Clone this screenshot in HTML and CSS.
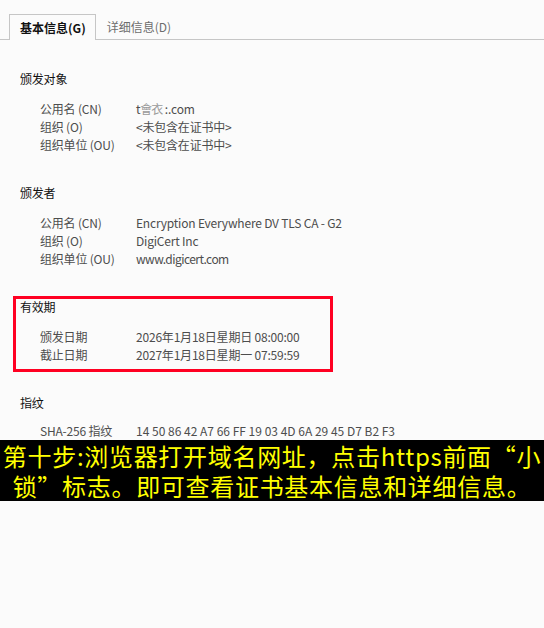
FILE: index.html
```html
<!DOCTYPE html>
<html lang="zh-CN">
<head>
<meta charset="utf-8">
<title>证书</title>
<link rel="stylesheet" href="styles.css">
</head>
<body>
<div class="page">
  <div class="tabs">
    <div class="tab active">基本信息(G)</div>
    <div class="tab">详细信息(D)</div>
  </div>
  <div class="content">
    <section class="sec first">
      <h2 class="hd">颁发对象</h2>
      <div class="rows">
        <div class="row"><span class="k">公用名 (CN)</span><span class="v">t<span class="blur">會衣</span> :.com</span></div>
        <div class="row"><span class="k">组织 (O)</span><span class="v">&lt;未包含在证书中&gt;</span></div>
        <div class="row"><span class="k">组织单位 (OU)</span><span class="v">&lt;未包含在证书中&gt;</span></div>
      </div>
    </section>
    <section class="sec">
      <h2 class="hd">颁发者</h2>
      <div class="rows">
        <div class="row"><span class="k">公用名 (CN)</span><span class="v">Encryption Everywhere DV TLS CA - G2</span></div>
        <div class="row"><span class="k">组织 (O)</span><span class="v">DigiCert Inc</span></div>
        <div class="row"><span class="k">组织单位 (OU)</span><span class="v tight">www.digicert.com</span></div>
      </div>
    </section>
    <section class="sec">
      <h2 class="hd">有效期</h2>
      <div class="rows">
        <div class="row"><span class="k">颁发日期</span><span class="v">2026年1月18日星期日 08:00:00</span></div>
        <div class="row"><span class="k">截止日期</span><span class="v">2027年1月18日星期一 07:59:59</span></div>
      </div>
    </section>
    <section class="sec">
      <h2 class="hd">指纹</h2>
      <div class="rows last">
        <div class="row"><span class="k">SHA-256 指纹</span><span class="v wide">14 50 86 42 A7 66 FF 19 03 4D 6A 29 45 D7 B2 F3</span></div>
      </div>
    </section>
  </div>
  <div class="caption">第十步:浏览器打开域名网址，点击https前面“小锁”标志。即可查看证书基本信息和详细信息。</div>
  <div class="redbox"></div>
</div>
</body>
</html>
```

FILE: styles.css
```css
html, body {
  margin: 0;
  padding: 0;
  background: #fbfbfb;
}
body {
  width: 544px;
  height: 628px;
  overflow: hidden;
  font-family: "Noto Sans CJK SC", "Noto Sans", sans-serif;
  font-size: 12px;
}
.page {
  position: relative;
  width: 544px;
  height: 628px;
}
.tabs {
  display: flex;
  padding: 14px 0 0 9px;
  border-bottom: 1px solid #c6c6c6;
  height: 25px;
}
.tab {
  height: 26px;
  line-height: 25px;
  padding: 0 10px 0 11px;
  color: #6d6d6d;
  box-sizing: border-box;
  white-space: nowrap;
}
.tab.active {
  border: 1px solid #c6c6c6;
  border-bottom: none;
  background: #fbfbfb;
  color: #111;
  font-weight: 700;
  padding: 0 9px 0 10px;
  position: relative;
  z-index: 1;
}
.content {
  padding-left: 20px;
  letter-spacing: -0.2px;
}
.sec {
  padding-top: 30px;
}
.hd {
  margin: 0;
  font-size: 12px;
  font-weight: 400;
  line-height: 18px;
  color: #111;
}
.rows {
  padding: 12px 0 0 20px;
}
.rows.last {
  padding-top: 10px;
}
.row {
  display: flex;
  line-height: 18px;
  height: 18px;
  color: #4d4d4d;
  white-space: nowrap;
}
.k {
  width: 96px;
  flex: none;
}
.tight {
  letter-spacing: -0.55px;
}
.wide {
  letter-spacing: 0;
}
.blur {
  color: #9a9a9a;
  letter-spacing: -1px;
}
.caption {
  position: relative;
  background: #000;
  color: #ffff00;
  font-family: "Noto Sans CJK SC", sans-serif;
  font-size: 24px;
  line-height: 30px;
  height: 61px;
  box-sizing: border-box;
  padding: 1px 0 0 0;
  letter-spacing: 0.7px;
  text-align: center;
}
.redbox {
  position: absolute;
  left: 13px;
  top: 296px;
  width: 320px;
  height: 76px;
  border: 3px solid #ff0022;
  box-sizing: border-box;
  pointer-events: none;
}
```
